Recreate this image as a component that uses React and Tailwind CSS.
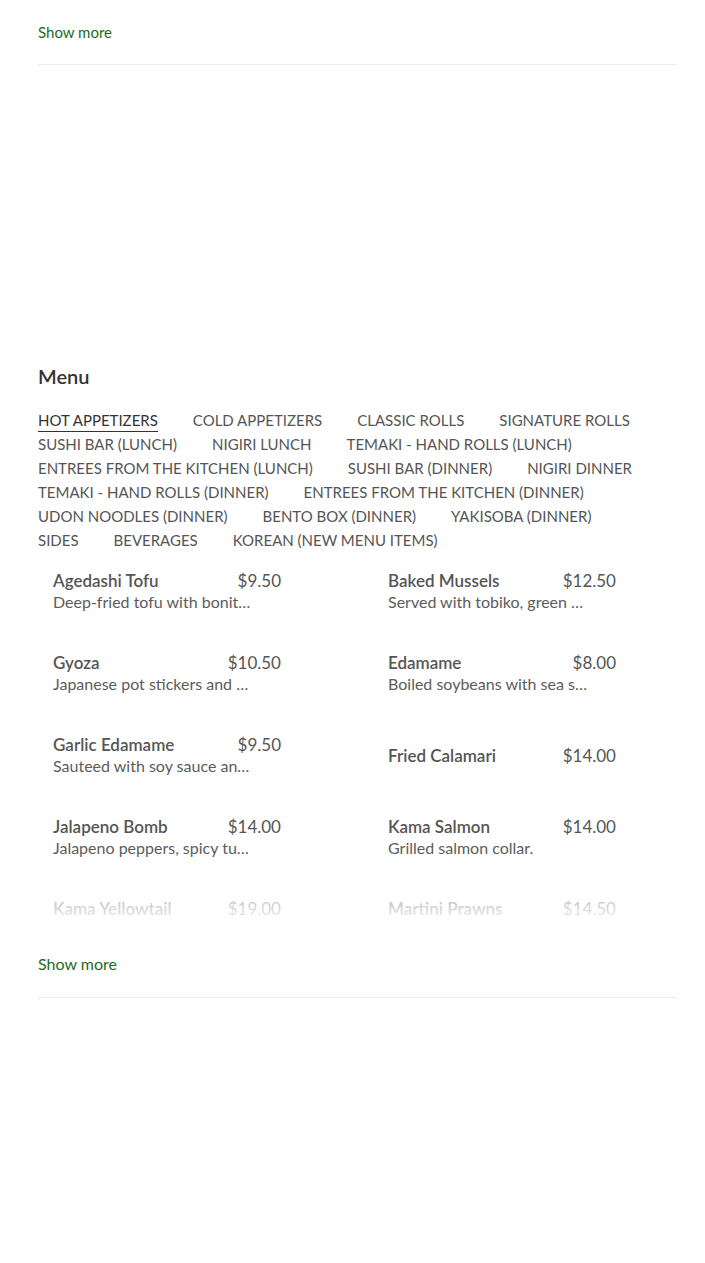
import { useState } from 'react';

const tabs = [
  'Hot Appetizers',
  'Cold Appetizers',
  'Classic Rolls',
  'Signature Rolls',
  'Sushi Bar (Lunch)',
  'Nigiri Lunch',
  'Temaki - Hand Rolls (Lunch)',
  'Entrees from the Kitchen (Lunch)',
  'Sushi Bar (Dinner)',
  'Nigiri Dinner',
  'Temaki - Hand Rolls (Dinner)',
  'Entrees from the Kitchen (Dinner)',
  'Udon Noodles (Dinner)',
  'Bento Box (Dinner)',
  'Yakisoba (Dinner)',
  'Sides',
  'Beverages',
  'Korean (New Menu Items)',
];

const items = [
  { name: 'Agedashi Tofu', price: '$9.50', desc: 'Deep-fried tofu with bonito flakes and tempura sauce.' },
  { name: 'Baked Mussels', price: '$12.50', desc: 'Served with tobiko, green onion and special sauce.' },
  { name: 'Gyoza', price: '$10.50', desc: 'Japanese pot stickers and dipping sauce.' },
  { name: 'Edamame', price: '$8.00', desc: 'Boiled soybeans with sea salt.' },
  { name: 'Garlic Edamame', price: '$9.50', desc: 'Sauteed with soy sauce and garlic.' },
  { name: 'Fried Calamari', price: '$14.00' },
  { name: 'Jalapeno Bomb', price: '$14.00', desc: 'Jalapeno peppers, spicy tuna and cream cheese.' },
  { name: 'Kama Salmon', price: '$14.00', desc: 'Grilled salmon collar.' },
  { name: 'Kama Yellowtail', price: '$19.00', desc: 'Grilled yellowtail collar.' },
  { name: 'Martini Prawns', price: '$14.50', desc: 'Prawns with special sauce.' },
];

const font = { fontFamily: 'Lato, "Open Sans", sans-serif' };

export default function App() {
  const [active, setActive] = useState(0);

  return (
    <div className="bg-white min-h-[1263px] pl-[38px] pr-[28px] text-[#555]" style={font}>
      {/* previous section footer */}
      <div className="pt-[20px] pb-[20px] border-b border-[#ececec]">
        <button className="text-[15px] leading-[22px] text-[#1d6b1d]">Show more</button>
      </div>

      {/* empty area */}
      <div className="h-[298px]" />

      {/* Menu */}
      <h2 className="text-[20px] leading-[26px] font-semibold text-[#333]">Menu</h2>

      <div className="mt-[19px] flex flex-wrap text-[15px] leading-[24px] uppercase">
        {tabs.map((t, i) => (
          <button
            key={t}
            onClick={() => setActive(i)}
            className={
              i === active
                ? 'mr-[35px] uppercase text-[#333] leading-[20px] h-[24px] border-b border-[#333]'
                : 'mr-[35px] uppercase text-[#555]'
            }
          >
            {t}
          </button>
        ))}
      </div>

      <div className="relative mt-[8px] h-[362px] overflow-hidden">
        <div className="grid grid-cols-[258px_258px] gap-x-[77px] gap-y-[20px]">
          {items.map((it) => (
            <div key={it.name} className="px-[15px] h-[62px] flex flex-col justify-center">
              <div className="flex justify-between items-baseline text-[16px] leading-[21px]">
                <span className="font-semibold text-[17px] text-[#555]">{it.name}</span>
                <span className="text-[17px] text-[#555]">{it.price}</span>
              </div>
              {it.desc && (
                <p className="text-[16px] leading-[21px] text-[#5c5c5c] truncate max-w-[200px]">{it.desc}</p>
              )}
            </div>
          ))}
        </div>
        <div className="absolute inset-x-0 bottom-0 h-[70px] bg-gradient-to-b from-white/0 to-white/95" />
      </div>

      <div className="pt-[30px] pb-[21px] border-b border-[#ececec]">
        <button className="text-[16px] leading-[22px] text-[#1d6b1d]">Show more</button>
      </div>
    </div>
  );
}
